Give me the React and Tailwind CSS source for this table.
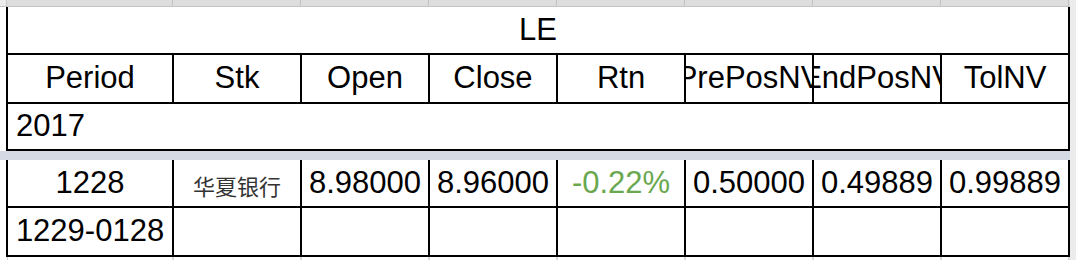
import React from 'react';

const font = { fontFamily: '"Liberation Sans", Arial, "Noto Sans CJK SC", sans-serif' };

const headers = ['Period', 'Stk', 'Open', 'Close', 'Rtn', 'PrePosNV', 'EndPosNV', 'TolNV'];

const grid = 'grid grid-cols-[166px_repeat(7,128px)]';

function Cell({ children, className = '' }) {
  return (
    <div className={`border-r-2 border-black flex items-center justify-center overflow-hidden whitespace-nowrap ${className}`}>
      {children}
    </div>
  );
}

export default function App() {
  return (
    <div className="w-[1076px] h-[260px] bg-white flex overflow-hidden text-black" style={font}>
      <div className="w-[1070px] flex flex-col">
        {/* column header strip */}
        <div className="h-[7px] flex border-b border-[#c4c4c4]">
          <div className="w-[7px] bg-[#ececec] border-r border-[#c8c8c8]" />
          <div className={`${grid} bg-[#dedede] flex-1`}>
            {headers.map((h, i) => (
              <div key={i} className="border-r border-[#c2c2c2]" />
            ))}
          </div>
        </div>

        <div className="ml-[6px] border-l-2 border-black">
          <div className="h-[48px] border-r-2 border-b-2 border-black flex items-center justify-center text-[31px]">
            LE
          </div>
          <div className={`${grid} h-[49px] border-b-2 border-black text-[31px]`}>
            {headers.map(h => <Cell key={h}>{h}</Cell>)}
          </div>
          <div className="h-[47px] border-r-2 border-b-2 border-black flex items-center pl-2 text-[31px]">
            2017
          </div>
        </div>

        <div className="h-[9px] bg-[#d5d9e3]" />

        <div className="ml-[6px] border-l-2 border-black">
          <div className={`${grid} h-[48px] border-b-2 border-black text-[31px]`}>
            <Cell>1228</Cell>
            <Cell className="text-[22px] text-[#333] pt-[8px]">华夏银行</Cell>
            <Cell>8.98000</Cell>
            <Cell>8.96000</Cell>
            <Cell className="text-[#6aa84f]">-0.22%</Cell>
            <Cell>0.50000</Cell>
            <Cell>0.49889</Cell>
            <Cell>0.99889</Cell>
          </div>
          <div className={`${grid} h-[49px] border-b-2 border-black text-[31px]`}>
            <Cell>1229-0128</Cell>
            {headers.slice(1).map(h => <Cell key={h} />)}
          </div>
        </div>

        <div className="ml-[6px] flex-1 flex">
          <div className="w-[2px] border-r border-[#d0d0d0]" />
          <div className={`${grid} flex-1`}>
            {headers.map((h, i) => (
              <div key={i} className="border-r-2 border-[#d8d8d8]" />
            ))}
          </div>
        </div>
      </div>
      <div className="flex-1 bg-[#ececec]" />
    </div>
  );
}
